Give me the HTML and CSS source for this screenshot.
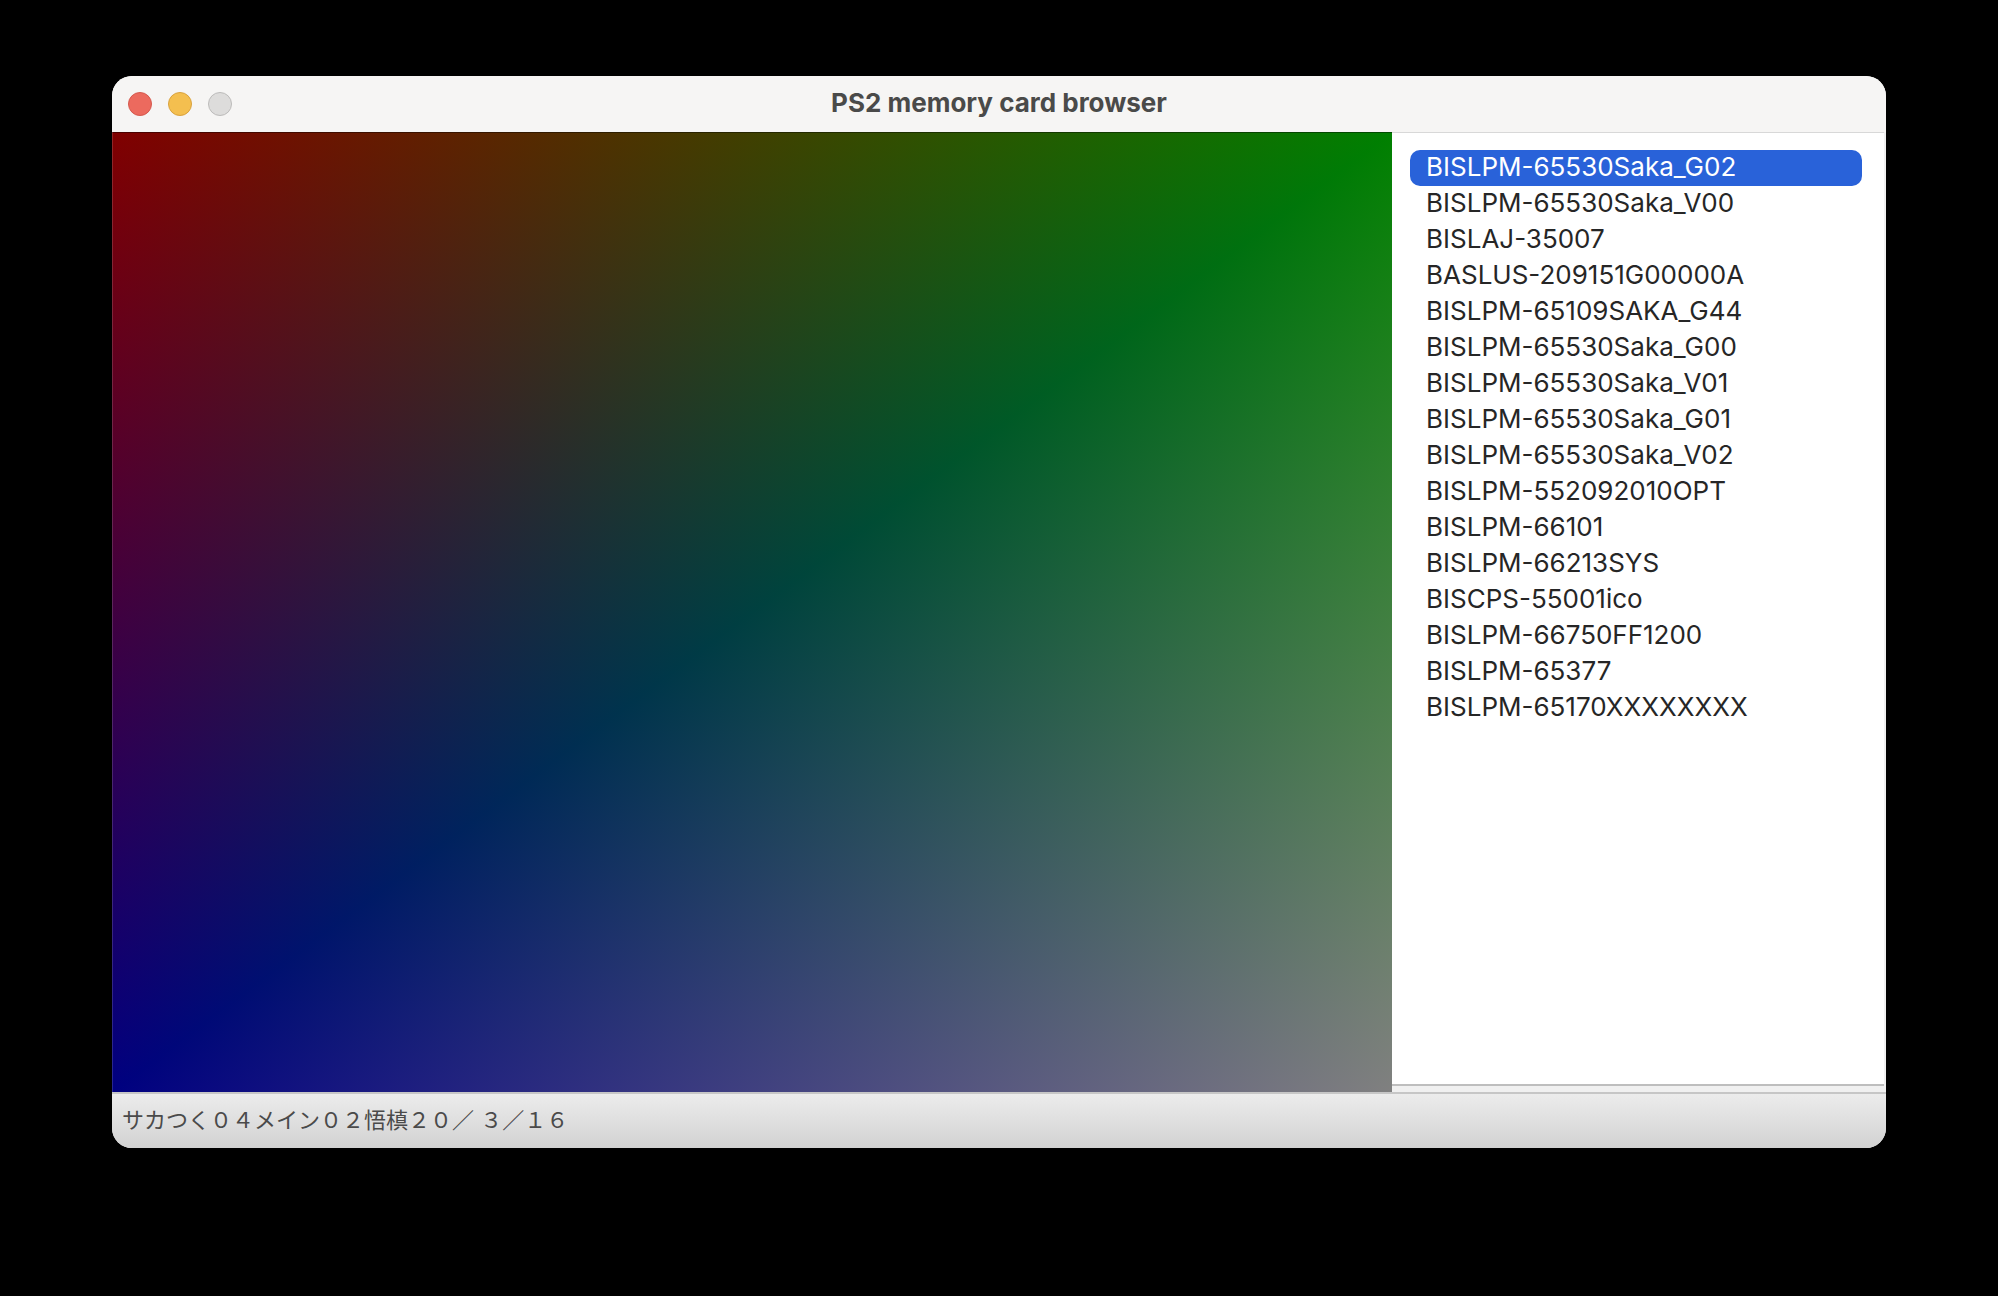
FILE: index.html
```html
<!DOCTYPE html>
<html lang="en">
<head>
<meta charset="utf-8">
<title>PS2 memory card browser</title>
<link rel="stylesheet" href="styles.css">
</head>
<body>
<main class="window">
  <header class="titlebar">
    <div class="lights">
      <button class="light light-close" type="button" aria-label="Close"></button>
      <button class="light light-minimize" type="button" aria-label="Minimize"></button>
      <button class="light light-zoom" type="button" aria-label="Zoom" disabled></button>
    </div>
    <h1 class="title">PS2 memory card browser</h1>
  </header>
  <div class="content">
    <div class="viewport" role="img" aria-label="Icon preview"></div>
    <nav class="sidebar" aria-label="Saves">
      <ul class="saves">
        <li><button class="save selected" type="button" aria-pressed="true">BISLPM-65530Saka_G02</button></li>
        <li><button class="save" type="button">BISLPM-65530Saka_V00</button></li>
        <li><button class="save" type="button">BISLAJ-35007</button></li>
        <li><button class="save" type="button">BASLUS-209151G00000A</button></li>
        <li><button class="save" type="button">BISLPM-65109SAKA_G44</button></li>
        <li><button class="save" type="button">BISLPM-65530Saka_G00</button></li>
        <li><button class="save" type="button">BISLPM-65530Saka_V01</button></li>
        <li><button class="save" type="button">BISLPM-65530Saka_G01</button></li>
        <li><button class="save" type="button">BISLPM-65530Saka_V02</button></li>
        <li><button class="save" type="button">BISLPM-552092010OPT</button></li>
        <li><button class="save" type="button">BISLPM-66101</button></li>
        <li><button class="save" type="button">BISLPM-66213SYS</button></li>
        <li><button class="save" type="button">BISCPS-55001ico</button></li>
        <li><button class="save" type="button">BISLPM-66750FF1200</button></li>
        <li><button class="save" type="button">BISLPM-65377</button></li>
        <li><button class="save" type="button">BISLPM-65170XXXXXXXX</button></li>
      </ul>
    </nav>
  </div>
  <footer class="status" lang="ja">サカつく０４メイン０２悟槙２０／ ３／１６</footer>
</main>
</body>
</html>
```

FILE: styles.css
```css
* {
  box-sizing: border-box;
}

body {
  margin: 0;
  padding: 76px 112px;
  background: #000;
  font-family: Inter, "Noto Sans CJK JP", sans-serif;
}

.window {
  display: flex;
  flex-direction: column;
  overflow: hidden;
  border-radius: 20px;
  background: #f0f0f0;
}

.titlebar {
  display: grid;
  grid-template-columns: 1fr auto 1fr;
  align-items: center;
  height: 56px;
  padding: 0 16px;
  background: #f6f5f4;
}

.lights {
  display: flex;
  gap: 16px;
}

.light {
  width: 24px;
  height: 24px;
  padding: 0;
  border: 1px solid;
  border-radius: 50%;
}

.light-close {
  background: #ec6a5e;
  border-color: #d5594e;
}

.light-minimize {
  background: #f4bf4f;
  border-color: #d9a23e;
}

.light-zoom {
  background: #dddcdb;
  border-color: #bcbbba;
}

.title {
  margin: 0;
  padding-bottom: 2px;
  color: #4a4a49;
  font-size: 26px;
  font-weight: 700;
  line-height: 32px;
}

.content {
  display: flex;
}

/* One gradient per colour channel, added together. */
.viewport {
  flex: 1;
  aspect-ratio: 4 / 3;
  background:
    linear-gradient(to bottom right, #800000, #000 50%, #800000),
    linear-gradient(to right, #000, #008000),
    linear-gradient(to bottom, #000, #000080);
  background-blend-mode: screen;
  box-shadow: inset 1px 0 rgba(255, 255, 255, 0.15), inset 0 1px rgba(0, 0, 0, 0.4);
}

.sidebar {
  display: flex;
  width: 494px;
  padding: 0 2px 6px 0;
}

.saves {
  flex: 1;
  margin: 0;
  padding: 17px 22px 17px 18px;
  border-top: 1px solid #d8d8d8;
  border-bottom: 2px solid #bebebe;
  background: #fff;
  list-style: none;
}

.save {
  display: block;
  width: 100%;
  height: 36px;
  padding: 0 16px 2px;
  border: 0;
  border-radius: 10px;
  background: none;
  color: #262626;
  font: 400 26px/34px Inter, sans-serif;
  text-align: left;
}

.selected {
  background: #2962d9;
  color: #fff;
}

.status {
  height: 56px;
  padding: 0 10px;
  border-top: 2px solid #c6c6c6;
  background: linear-gradient(#ececec, #d2d2d2);
  color: #4a4a4a;
  font-size: 22px;
  line-height: 52px;
}
```
